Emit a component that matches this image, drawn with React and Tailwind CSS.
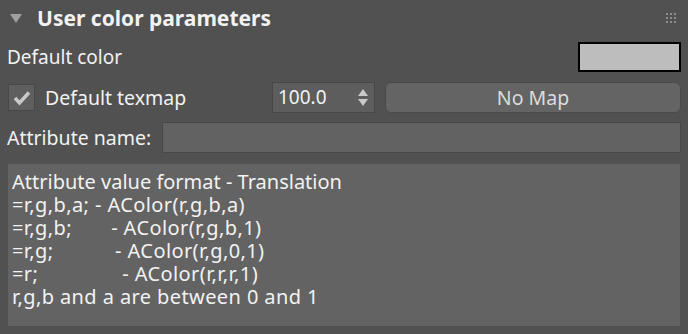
import React from 'react';

const lines = [
  'Attribute value format - Translation',
  '=r,g,b,a; - AColor(r,g,b,a)',
  '=r,g,b;       - AColor(r,g,b,1)',
  '=r,g;           - AColor(r,g,0,1)',
  '=r;               - AColor(r,r,r,1)',
  'r,g,b and a are between 0 and 1',
];

function GripDots() {
  return (
    <svg width="10" height="10" viewBox="0 0 10 10" className="block">
      {[0, 4, 8].map((y) =>
        [0, 4, 8].map((x) => <rect key={`${x}-${y}`} x={x} y={y} width="2" height="2" fill="#8c8c8c" />)
      )}
    </svg>
  );
}

export default function App() {
  return (
    <div
      className="w-[688px] h-[334px] bg-[#515151] text-[#f2f2f2] overflow-hidden"
      style={{ fontFamily: '"Noto Sans", "Open Sans", sans-serif' }}
    >
      {/* rollout header */}
      <div className="h-[36px] flex items-center pl-[10px] pr-[12px]">
        <svg width="12" height="9" viewBox="0 0 12 9" className="block">
          <path d="M0 0 H12 L6 9 Z" fill="#a0a0a0" />
        </svg>
        <span className="ml-[15px] text-[21px] font-bold leading-none">User color parameters</span>
        <div className="ml-auto">
          <GripDots />
        </div>
      </div>

      {/* default color */}
      <div className="mt-[6px] h-[30px] flex items-center justify-between pl-[7px] pr-[7px]">
        <span className="text-[19px] leading-none">Default color</span>
        <div className="w-[103px] h-[30px] border-2 border-black bg-[#bdbdbd]" />
      </div>

      {/* default texmap */}
      <div className="mt-[10px] h-[31px] flex items-center pl-[8px] pr-[7px]">
        <div className="flex-1 flex items-center">
          <div className="w-[27px] h-[27px] bg-[#5f5f5f] border border-[#484848] flex items-center justify-center">
            <svg width="18" height="16" viewBox="0 0 18 16" className="block">
              <path d="M2 8 L6.5 13 L16 2.5" fill="none" stroke="#c8c8c8" strokeWidth="3.5" />
            </svg>
          </div>
          <span className="ml-[10px] text-[19.5px] leading-none">Default texmap</span>
        </div>
        <div className="w-[103px] h-[31px] bg-[#5d5d5d] border border-[#474747] flex items-center pl-[5px] pr-[6px]">
          <span className="text-[19px] leading-none">100.0</span>
          <svg width="10" height="20" viewBox="0 0 10 20" className="block ml-auto">
            <path d="M0 8 L5 1 L10 8 Z" fill="#c8c8c8" />
            <path d="M0 11 L10 11 L5 18 Z" fill="#c8c8c8" />
          </svg>
        </div>
        <button className="ml-[10px] w-[296px] h-[31px] rounded-[6px] bg-[#646464] border border-[#4a4a4a] text-[19.5px] leading-none text-[#dcdcdc]">
          No Map
        </button>
      </div>

      {/* attribute name */}
      <div className="mt-[9px] h-[31px] flex items-center pl-[7px] pr-[7px]">
        <span className="text-[19.5px] leading-none">Attribute name:</span>
        <div className="ml-auto w-[519px] h-[31px] bg-[#626262] border border-[#484848]" />
      </div>

      {/* info text */}
      <div className="mt-[11px] mx-[8px] h-[162px] bg-[#636363] pt-[6px] pl-[4px]">
        {lines.map((l, i) => (
          <div key={i} className={i === 0 ? 'text-[20px] leading-[23px] whitespace-pre' : 'text-[20px] leading-[23px] whitespace-pre tracking-[0.4px]'}>
            {l}
          </div>
        ))}
      </div>
    </div>
  );
}
